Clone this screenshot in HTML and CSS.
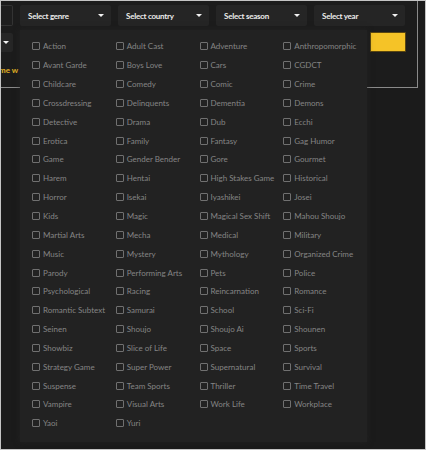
FILE: index.html
```html
<!DOCTYPE html>
<html lang="en">
<head>
<meta charset="utf-8">
<title>Filter</title>
<link rel="stylesheet" href="styles.css">
</head>
<body>
<div class="frame">
  <div class="filters">
    <div class="side">
      <div class="field"></div>
      <div class="mini-select"><span class="caret"></span></div>
      <div class="notice"><span class="clip">Ani</span>me w</div>
    </div>
    <div class="main">
      <div class="selects">
        <div class="select"><span>Select genre</span><span class="caret"></span></div>
        <div class="select"><span>Select country</span><span class="caret"></span></div>
        <div class="select"><span>Select season</span><span class="caret"></span></div>
        <div class="select"><span>Select year</span><span class="caret"></span></div>
      </div>
      <div class="actions">
        <button class="go" type="button"></button>
      </div>
    </div>
  </div>

  <div class="menu">
    <label class="opt"><span class="box"></span>Action</label>
    <label class="opt"><span class="box"></span>Adult Cast</label>
    <label class="opt"><span class="box"></span>Adventure</label>
    <label class="opt"><span class="box"></span>Anthropomorphic</label>
    <label class="opt"><span class="box"></span>Avant Garde</label>
    <label class="opt"><span class="box"></span>Boys Love</label>
    <label class="opt"><span class="box"></span>Cars</label>
    <label class="opt"><span class="box"></span>CGDCT</label>
    <label class="opt"><span class="box"></span>Childcare</label>
    <label class="opt"><span class="box"></span>Comedy</label>
    <label class="opt"><span class="box"></span>Comic</label>
    <label class="opt"><span class="box"></span>Crime</label>
    <label class="opt"><span class="box"></span>Crossdressing</label>
    <label class="opt"><span class="box"></span>Delinquents</label>
    <label class="opt"><span class="box"></span>Dementia</label>
    <label class="opt"><span class="box"></span>Demons</label>
    <label class="opt"><span class="box"></span>Detective</label>
    <label class="opt"><span class="box"></span>Drama</label>
    <label class="opt"><span class="box"></span>Dub</label>
    <label class="opt"><span class="box"></span>Ecchi</label>
    <label class="opt"><span class="box"></span>Erotica</label>
    <label class="opt"><span class="box"></span>Family</label>
    <label class="opt"><span class="box"></span>Fantasy</label>
    <label class="opt"><span class="box"></span>Gag Humor</label>
    <label class="opt"><span class="box"></span>Game</label>
    <label class="opt"><span class="box"></span>Gender Bender</label>
    <label class="opt"><span class="box"></span>Gore</label>
    <label class="opt"><span class="box"></span>Gourmet</label>
    <label class="opt"><span class="box"></span>Harem</label>
    <label class="opt"><span class="box"></span>Hentai</label>
    <label class="opt"><span class="box"></span>High Stakes Game</label>
    <label class="opt"><span class="box"></span>Historical</label>
    <label class="opt"><span class="box"></span>Horror</label>
    <label class="opt"><span class="box"></span>Isekai</label>
    <label class="opt"><span class="box"></span>Iyashikei</label>
    <label class="opt"><span class="box"></span>Josei</label>
    <label class="opt"><span class="box"></span>Kids</label>
    <label class="opt"><span class="box"></span>Magic</label>
    <label class="opt"><span class="box"></span>Magical Sex Shift</label>
    <label class="opt"><span class="box"></span>Mahou Shoujo</label>
    <label class="opt"><span class="box"></span>Martial Arts</label>
    <label class="opt"><span class="box"></span>Mecha</label>
    <label class="opt"><span class="box"></span>Medical</label>
    <label class="opt"><span class="box"></span>Military</label>
    <label class="opt"><span class="box"></span>Music</label>
    <label class="opt"><span class="box"></span>Mystery</label>
    <label class="opt"><span class="box"></span>Mythology</label>
    <label class="opt"><span class="box"></span>Organized Crime</label>
    <label class="opt"><span class="box"></span>Parody</label>
    <label class="opt"><span class="box"></span>Performing Arts</label>
    <label class="opt"><span class="box"></span>Pets</label>
    <label class="opt"><span class="box"></span>Police</label>
    <label class="opt"><span class="box"></span>Psychological</label>
    <label class="opt"><span class="box"></span>Racing</label>
    <label class="opt"><span class="box"></span>Reincarnation</label>
    <label class="opt"><span class="box"></span>Romance</label>
    <label class="opt"><span class="box"></span>Romantic Subtext</label>
    <label class="opt"><span class="box"></span>Samurai</label>
    <label class="opt"><span class="box"></span>School</label>
    <label class="opt"><span class="box"></span>Sci-Fi</label>
    <label class="opt"><span class="box"></span>Seinen</label>
    <label class="opt"><span class="box"></span>Shoujo</label>
    <label class="opt"><span class="box"></span>Shoujo Ai</label>
    <label class="opt"><span class="box"></span>Shounen</label>
    <label class="opt"><span class="box"></span>Showbiz</label>
    <label class="opt"><span class="box"></span>Slice of Life</label>
    <label class="opt"><span class="box"></span>Space</label>
    <label class="opt"><span class="box"></span>Sports</label>
    <label class="opt"><span class="box"></span>Strategy Game</label>
    <label class="opt"><span class="box"></span>Super Power</label>
    <label class="opt"><span class="box"></span>Supernatural</label>
    <label class="opt"><span class="box"></span>Survival</label>
    <label class="opt"><span class="box"></span>Suspense</label>
    <label class="opt"><span class="box"></span>Team Sports</label>
    <label class="opt"><span class="box"></span>Thriller</label>
    <label class="opt"><span class="box"></span>Time Travel</label>
    <label class="opt"><span class="box"></span>Vampire</label>
    <label class="opt"><span class="box"></span>Visual Arts</label>
    <label class="opt"><span class="box"></span>Work Life</label>
    <label class="opt"><span class="box"></span>Workplace</label>
    <label class="opt"><span class="box"></span>Yaoi</label>
    <label class="opt"><span class="box"></span>Yuri</label>
  </div>
</div>
</body>
</html>
```
FILE: styles.css
```css
* { box-sizing: border-box; }

html, body {
  margin: 0;
  padding: 0;
  background: #1b1b1b;
}

.frame {
  position: relative;
  width: 426px;
  height: 450px;
  border: 1px solid #c4c4c4;
  background: #1b1b1b;
  overflow: hidden;
  font-family: Lato, "Open Sans", sans-serif;
}

.filters {
  display: flex;
  width: 417px;
  height: 87px;
  padding-top: 4px;
  border-right: 1px solid #8a8a8a;
  border-bottom: 1px solid #8a8a8a;
  background: #1c1c1c;
}

.side {
  flex: none;
  width: 12px;
}

.field {
  height: 21px;
  background: #1e1e1e;
  border: 1px solid #333;
  border-left: none;
  border-radius: 0 2px 2px 0;
}

.mini-select {
  display: flex;
  align-items: center;
  height: 19px;
  margin-top: 7px;
  padding-left: 2px;
  background: #262626;
  border-radius: 0 2px 2px 0;
}

.notice {
  margin-top: 13px;
  margin-left: -14px;
  white-space: nowrap;
  font-size: 8px;
  font-weight: 700;
  line-height: 10px;
  color: #e3b324;
}

.clip { visibility: hidden; }

.main {
  margin-left: 7px;
  width: 386px;
}

.selects {
  display: grid;
  grid-template-columns: repeat(4, 91px);
  column-gap: 7px;
}

.select {
  display: flex;
  align-items: center;
  justify-content: space-between;
  height: 21px;
  padding: 0 7px 0 8px;
  background: #252525;
  border-radius: 2px;
  color: #ececec;
  font-size: 8px;
  font-weight: 700;
  letter-spacing: -0.25px;
}

.caret {
  width: 0;
  height: 0;
  border-left: 3px solid transparent;
  border-right: 3px solid transparent;
  border-top: 3px solid #f2f2f2;
}

.actions {
  display: flex;
  justify-content: flex-end;
  margin-top: 6px;
}

.go {
  width: 36px;
  height: 20px;
  padding: 0;
  border: 1px solid #5a4610;
  background: #f5c327;
  border-radius: 1px;
}

.menu {
  position: absolute;
  left: 19px;
  top: 29px;
  width: 347px;
  height: 412px;
  padding: 7px 0 9px 12px;
  background: #222222;
  box-shadow: 0 0 6px rgba(40, 40, 40, 0.6);
  display: grid;
  grid-template-columns: repeat(4, 83.75px);
  grid-auto-rows: 18.85px;
  align-content: start;
}

.opt {
  display: flex;
  align-items: center;
  gap: 3px;
  color: #858585;
  font-size: 8px;
  white-space: nowrap;
}

.box {
  flex: none;
  width: 8px;
  height: 8px;
  border: 1px solid #707070;
  border-radius: 1px;
}
```
